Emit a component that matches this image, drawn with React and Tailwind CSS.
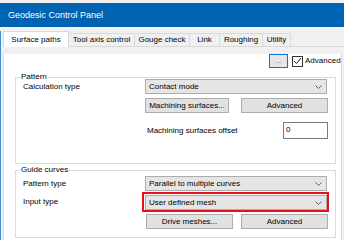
import React from 'react'

const tabs = [
  { name: 'Surface paths', w: 'w-[66px]', active: true },
  { name: 'Tool axis control', w: 'w-[67px]' },
  { name: 'Gouge check', w: 'w-[56px]' },
  { name: 'Link', w: 'w-[31px]' },
  { name: 'Roughing', w: 'w-[44px]' },
  { name: 'Utility', w: 'w-[29px]' },
]

// little combobox arrow
function Chevron() {
  return (
    <svg width="7" height="4" viewBox="0 0 7 4" className="shrink-0">
      <path d="M0.5 0.5 L3.5 3.5 L6.5 0.5" fill="none" stroke="#606060" strokeWidth="1" />
    </svg>
  )
}

function Dropdown({ label, className = '' }) {
  return (
    <div className={`flex h-[15px] items-center justify-between border border-[#adadad] bg-[#e5e5e5] pl-[3px] pr-[4px] ${className}`}>
      <span>{label}</span>
      <Chevron />
    </div>
  )
}

function Btn({ children, className = '' }) {
  return (
    <div className={`flex h-[15px] items-center justify-center border border-[#adadad] bg-[#e1e1e1] ${className}`}>
      {children}
    </div>
  )
}

function Group({ title, className = '', children }) {
  return (
    <div className={`relative ml-[11px] flex w-[321px] flex-col border border-[#dcdcdc] ${className}`}>
      <span className="absolute -top-[6px] left-[4px] bg-white px-[1px] leading-[10px]">{title}</span>
      {children}
    </div>
  )
}

export default function App() {
  return (
    <div className="h-[240px] w-[344px] overflow-hidden bg-[#f2f2f2] pt-[3px] font-['Liberation_Sans',Arial,sans-serif] text-[8px] leading-[10px] text-black">
      {/* title bar */}
      <div className="flex h-[24px] items-center bg-[#0063b1] pl-[8px] text-[9px] text-white">
        Geodesic Control Panel
      </div>

      <div className="h-[220px] border-l border-[#3f8fd8] bg-[#f0f0f0] pl-[2px]">
        {/* tabs */}
        <div className="mt-[4px] flex h-[16px] items-end">
          {tabs.map((t) =>
            t.active ? (
              <div key={t.name} className={`flex h-[16px] items-center justify-center border-x border-t border-[#d9d9d9] bg-white ${t.w}`}>
                {t.name}
              </div>
            ) : (
              <div key={t.name} className={`-ml-px flex h-[14px] items-center justify-center border border-[#d9d9d9] bg-[#f0f0f0] ${t.w}`}>
                {t.name}
              </div>
            )
          )}
          <div className="h-[1px] flex-1 bg-[#d9d9d9]" />
        </div>

        {/* panel */}
        <div className="h-[200px] w-[339px] border-x border-[#d9d9d9] bg-white">
          <div className="mt-[7px] flex items-center pl-[265px]">
            <div className="flex h-[14px] w-[19px] items-center justify-center border border-[#0078d7] bg-[#e5e5e5] text-[#777]">...</div>
            <div className="ml-[4px] flex h-[11px] w-[11px] items-center justify-center border border-[#333] bg-white">
              <svg width="9" height="8" viewBox="0 0 9 8">
                <path d="M1 4 L3.5 6.5 L8 1" fill="none" stroke="#222" strokeWidth="1" />
              </svg>
            </div>
            <span className="ml-[2px] whitespace-nowrap">Advanced</span>
          </div>

          {/* pattern */}
          <Group title="Pattern" className="mt-[9px] h-[87px]">
            <div className="mt-[1px] flex items-center">
              <span className="w-[129px] pl-[7px]">Calculation type</span>
              <Dropdown label="Contact mode" className="w-[182px]" />
            </div>
            <div className="mt-[4px] flex pl-[129px]">
              <Btn className="w-[84px]">Machining surfaces...</Btn>
              <Btn className="ml-[12px] w-[87px]">Advanced</Btn>
            </div>
            <div className="mt-[9px] flex items-center pl-[131px]">
              <span className="w-[136px]">Machining surfaces offset</span>
              <div className="h-[17px] w-[45px] border border-[#7a7a7a] bg-white pl-[2px] pt-[2px]">0</div>
            </div>
          </Group>

          {/* guide curves */}
          <Group title="Guide curves" className="mt-[6px] h-[68px]">
            <div className="mt-[5px] flex items-center">
              <span className="w-[129px] pl-[7px]">Pattern type</span>
              <Dropdown label="Parallel to multiple curves" className="w-[182px]" />
            </div>
            <div className="mt-[1px] flex items-center">
              <span className="w-[126px] pl-[7px]">Input type</span>
              <div className="h-[20px] w-[187px] border-2 border-[#e8101a] pl-[1px] pt-[1px]">
                <Dropdown label="User defined mesh" className="w-[182px]" />
              </div>
            </div>
            <div className="mt-[2px] flex pl-[130px]">
              <Btn className="w-[87px]">Drive meshes...</Btn>
              <Btn className="ml-[8px] w-[87px]">Advanced</Btn>
            </div>
          </Group>
        </div>
      </div>
    </div>
  )
}
